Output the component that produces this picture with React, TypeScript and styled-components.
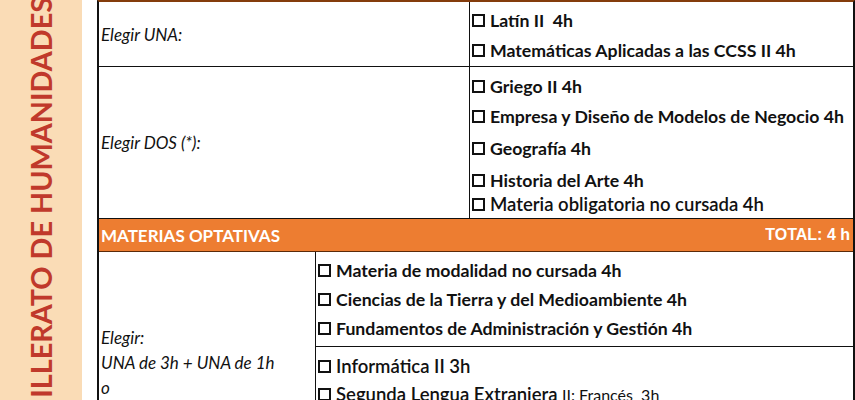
import React from "react";
import styled, { createGlobalStyle } from "styled-components";

const GlobalStyle = createGlobalStyle`
  html, body { margin: 0; padding: 0; background: #ffffff; }
  body { font-family: Lato, "Open Sans", sans-serif; color: #111; }
`;

const Page = styled.div`
  display: flex;
  width: 855px;
  height: 400px;
  overflow: hidden;
`;

const Sidebar = styled.div`
  flex: none;
  width: 82px;
  height: 400px;
  background: #fadcb6;
  display: flex;
  justify-content: center;
  align-items: flex-start;
  overflow: hidden;
`;

const SideTitle = styled.div`
  writing-mode: vertical-rl;
  transform: rotate(180deg);
  font-family: Lato, "Open Sans", sans-serif;
  font-weight: 700;
  font-size: 28.8px;
  color: #c0392b;
  white-space: nowrap;
  margin-top: -3px;
`;

const Gutter = styled.div`
  flex: none;
  width: 15px;
`;

const Table = styled.div`
  flex: 1;
  min-width: 0;
  display: flex;
  flex-direction: column;
  border-left: 2px solid #111;
  border-right: 2px solid #111;
  border-top: 2px solid #843c0c;
`;

const Row = styled.div<{ $left: number; $h?: number }>`
  flex: none;
  display: grid;
  grid-template-columns: ${(p) => p.$left}px 1fr;
  border-bottom: 1px solid #111;
  ${(p) => (p.$h ? `height: ${p.$h}px;` : "")}
  box-sizing: content-box;
`;

const Label = styled.div<{ $top?: number }>`
  border-right: 1px solid #111;
  font-style: italic;
  font-size: 17px;
  padding-left: 2px;
  display: flex;
  flex-direction: column;
  justify-content: ${(p) => (p.$top !== undefined ? "flex-start" : "center")};
  padding-top: ${(p) => p.$top ?? 0}px;
  line-height: 25px;
`;

const Cell = styled.div<{ $pt: number; $pb?: number; $rule?: boolean }>`
  padding-top: ${(p) => p.$pt}px;
  padding-bottom: ${(p) => p.$pb ?? 0}px;
  ${(p) => (p.$rule ? "border-bottom: 1px solid #111;" : "")}
`;

const Item = styled.div<{ $lh: number; $plain?: boolean }>`
  display: flex;
  align-items: center;
  height: ${(p) => p.$lh}px;
  padding-left: 2px;
  white-space: pre;
  font-size: ${(p) => (p.$plain ? 18.5 : 17.7)}px;
  font-weight: ${(p) => (p.$plain ? 600 : 700)};
`;

const Box = styled.span`
  display: inline-block;
  flex: none;
  width: 13px;
  height: 13px;
  border: 2px solid #111;
  box-sizing: border-box;
  margin-right: 5px;
`;

const Light = styled.span`
  font-weight: 400;
  font-size: 16px;
`;

const Band = styled.div`
  flex: none;
  height: 32px;
  background: #ed7d31;
  border-bottom: 1px solid #5a2a0a;
  display: flex;
  align-items: center;
  justify-content: space-between;
  padding: 0 3px 0 2px;
  color: #fff;
`;

const BandTitle = styled.span`
  font-family: Lato, "Open Sans", sans-serif;
  font-weight: 700;
  font-size: 17px;
`;

const BandTotal = styled.span`
  font-family: "Liberation Sans", Arial, sans-serif;
  font-weight: 700;
  font-size: 16px;
`;

type Opt = { t: React.ReactNode; h: number; plain?: boolean };

const Options = ({ items }: { items: Opt[] }) => (
  <>
    {items.map((o, i) => (
      <Item key={i} $lh={o.h} $plain={o.plain}>
        <Box />
        {o.t}
      </Item>
    ))}
  </>
);

export default function App() {
  return (
    <>
      <GlobalStyle />
      <Page>
        <Sidebar>
          <SideTitle>BACHILLERATO DE HUMANIDADES</SideTitle>
        </Sidebar>
        <Gutter />
        <Table>
          <Row $left={371} $h={64}>
            <Label>Elegir UNA:</Label>
            <Cell $pt={3}>
              <Options
                items={[
                  { t: "Latín II  4h", h: 30 },
                  { t: "Matemáticas Aplicadas a las CCSS II 4h", h: 30 },
                ]}
              />
            </Cell>
          </Row>
          <Row $left={371} $h={151}>
            <Label>Elegir DOS (*):</Label>
            <Cell $pt={4}>
              <Options
                items={[
                  { t: "Griego II 4h", h: 30 },
                  { t: "Empresa y Diseño de Modelos de Negocio 4h", h: 30 },
                  { t: "Geografía 4h", h: 35 },
                  { t: "Historia del Arte 4h", h: 29 },
                  { t: "Materia obligatoria no cursada 4h", h: 18, plain: true },
                ]}
              />
            </Cell>
          </Row>
          <Band>
            <BandTitle>MATERIAS OPTATIVAS</BandTitle>
            <BandTotal>TOTAL: 4 h</BandTotal>
          </Band>
          <Row $left={217}>
            <Label $top={73}>
              <span>Elegir:</span>
              <span>UNA de 3h + UNA de 1h</span>
              <span>o</span>
            </Label>
            <div>
              <Cell $pt={4} $pb={3} $rule>
                <Options
                  items={[
                    { t: "Materia de modalidad no cursada 4h", h: 29 },
                    { t: "Ciencias de la Tierra y del Medioambiente 4h", h: 29 },
                    { t: "Fundamentos de Administración y Gestión 4h", h: 29 },
                  ]}
                />
              </Cell>
              <Cell $pt={5}>
                <Options
                  items={[
                    { t: "Informática II 3h", h: 28, plain: true },
                    {
                      t: (
                        <>
                          Segunda Lengua Extranjera <Light>II: Francés  3h</Light>
                        </>
                      ),
                      h: 28,
                      plain: true,
                    },
                  ]}
                />
              </Cell>
            </div>
          </Row>
        </Table>
      </Page>
    </>
  );
}
